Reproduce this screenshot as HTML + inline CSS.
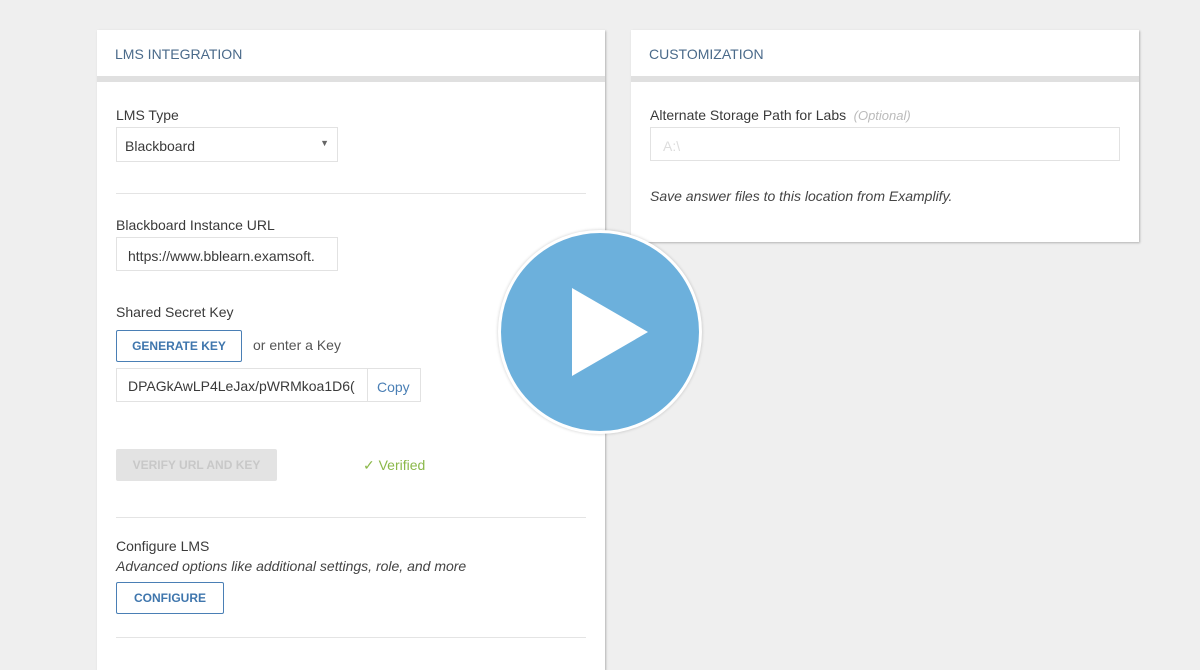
<!DOCTYPE html>
<html><head><style>
body{margin:0;width:1200px;height:653px;background:#efefef;font-family:"Liberation Sans",sans-serif;position:relative;overflow:hidden;color:#3a3a3a}
.p{position:absolute;background:#fff;box-shadow:1px 1px 2px rgba(0,0,0,.25)}
.h{height:46px;border-bottom:6px solid #e0e0e0;box-sizing:content-box}
.h span{position:absolute;left:18px;top:16px;font-size:14px;color:#4a6a8a}
.t{position:absolute;font-size:14px}
.box{position:absolute;border:1px solid #e2e2e2;background:#fff;font-size:14px;box-sizing:border-box}
.hr{position:absolute;left:19px;width:470px;height:1px;background:#e4e4e4}
.btn{position:absolute;border:1px solid #4a7fb5;border-radius:2px;color:#3f76ad;font-size:12px;font-weight:bold;text-align:center;box-sizing:border-box}
</style></head><body>
<div class="p" style="left:97px;top:30px;width:508px;height:640px">
<div class="h"><span>LMS INTEGRATION</span></div>
<div class="t" style="left:19px;top:77px">LMS Type</div>
<div class="box" style="left:19px;top:97px;width:222px;height:35px;padding:10px 8px">Blackboard<span style="position:absolute;right:8px;top:10px;font-size:9px;color:#666">▼</span></div>
<div class="hr" style="top:163px"></div>
<div class="t" style="left:19px;top:187px">Blackboard Instance URL</div>
<div class="box" style="left:19px;top:207px;width:222px;height:34px;padding:10px 11px">https://www.bblearn.examsoft.</div>
<div class="t" style="left:19px;top:274px">Shared Secret Key</div>
<div class="btn" style="left:19px;top:300px;width:126px;height:32px;line-height:30px">GENERATE KEY</div>
<div class="t" style="left:156px;top:307px;color:#555">or enter a Key</div>
<div class="box" style="left:19px;top:338px;width:252px;height:34px;padding:9px 11px;white-space:nowrap;overflow:hidden">DPAGkAwLP4LeJax/pWRMkoa1D6(</div>
<div class="box" style="left:270px;top:338px;width:54px;height:34px;padding:10px 9px;color:#4a7fb5">Copy</div>
<div style="position:absolute;left:19px;top:419px;width:161px;height:32px;background:#e3e3e3;border-radius:2px;color:#c8c8c8;font-size:12px;font-weight:bold;text-align:center;line-height:32px">VERIFY URL AND KEY</div>
<div class="t" style="left:266px;top:427px;color:#8bb84a">✓ Verified</div>
<div class="hr" style="top:487px"></div>
<div class="t" style="left:19px;top:508px">Configure LMS</div>
<div class="t" style="left:19px;top:528px;font-style:italic;font-size:14px;color:#444">Advanced options like additional settings, role, and more</div>
<div class="btn" style="left:19px;top:552px;width:108px;height:32px;line-height:30px">CONFIGURE</div>
<div class="hr" style="top:607px"></div>
</div>
<div class="p" style="left:631px;top:30px;width:508px;height:212px">
<div class="h"><span>CUSTOMIZATION</span></div>
<div class="t" style="left:19px;top:77px">Alternate Storage Path for Labs <i style="color:#bbb;font-size:13px">&nbsp;(Optional)</i></div>
<div class="box" style="left:19px;top:97px;width:470px;height:34px;padding:10px 12px;color:#ddd">A:\</div>
<div class="t" style="left:19px;top:158px;font-style:italic;font-size:14px;color:#444">Save answer files to this location from Examplify.</div>
</div>
<div style="position:absolute;left:498px;top:230px;width:204px;height:204px;border-radius:50%;background:#6cb0dc;box-sizing:border-box;border:3px solid #fff;box-shadow:0 0 3px rgba(0,0,0,.2)"></div>
<svg style="position:absolute;left:0;top:0" width="1200" height="653"><polygon points="572,288 572,376 648,332" fill="#fff"/></svg>
</body></html>
